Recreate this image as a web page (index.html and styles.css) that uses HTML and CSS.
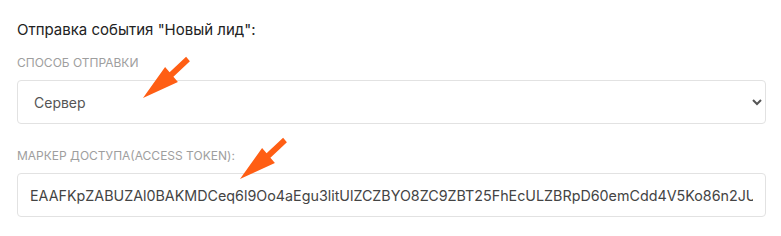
FILE: index.html
```html
<!DOCTYPE html>
<html lang="ru">
<head>
  <meta charset="UTF-8">
  <title>Отправка события</title>
  <link rel="stylesheet" href="styles.css">
</head>
<body>
  <div class="panel">
    <div class="panel-title">Отправка события "Новый лид":</div>

    <div class="field">
      <label class="field-label" for="send-mode">Способ отправки</label>
      <select id="send-mode" class="field-control">
        <option>Сервер</option>
        <option>Браузер</option>
      </select>
    </div>

    <div class="field">
      <label class="field-label" for="access-token">Маркер доступа(access token):</label>
      <input id="access-token" class="field-control token" type="text" value="EAAFKpZABUZAl0BAKMDCeq6l9Oo4aEgu3litUlZCZBYO8ZC9ZBT25FhEcULZBRpD60emCdd4V5Ko86n2JUcZBWx7">
    </div>

    <!-- pointer arrows -->
    <svg class="pointer pointer-mode" width="54" height="48" viewBox="0 0 54 48">
      <polygon points="46.1,2.7 49.9,7.3 33.4,22.8 37.9,28 3,44 25.1,13 29.6,18.2"/>
    </svg>
    <svg class="pointer pointer-token" width="54" height="48" viewBox="0 0 54 48">
      <polygon points="46.1,2.7 49.9,7.3 33.4,22.8 37.9,28 3,44 25.1,13 29.6,18.2"/>
    </svg>
  </div>
</body>
</html>
```

FILE: styles.css
```css
body {
  margin: 0;
  padding: 0;
  background: #fff;
  font-family: 'Inter', 'Liberation Sans', sans-serif;
  color: #222;
}

.panel {
  position: relative;
  padding: 20px 15px 0 17px;
}

.panel-title {
  font-size: 15px;
  line-height: 20px;
  color: #222;
  margin-bottom: 16px;
}

.field {
  margin-bottom: 25px;
}

.field-label {
  display: block;
  font-size: 12px;
  line-height: 14px;
  text-transform: uppercase;
  color: #9e9e9e;
  margin-bottom: 10px;
}

.field-control {
  display: block;
  box-sizing: border-box;
  width: 100%;
  height: 44px;
  padding: 0 12px;
  border: 1px solid #e2e2e2;
  border-radius: 4px;
  background: #fff;
  font-family: inherit;
  font-size: 14px;
  color: #444;
  outline: none;
}

select.field-control {
  color: #555;
}

.field-control.token {
  font-size: 14.3px;
}

.pointer {
  position: absolute;
}

.pointer polygon {
  fill: #ff5e14;
}

.pointer-mode {
  left: 140px;
  top: 54px;
}

.pointer-token {
  left: 237px;
  top: 135px;
}
```
